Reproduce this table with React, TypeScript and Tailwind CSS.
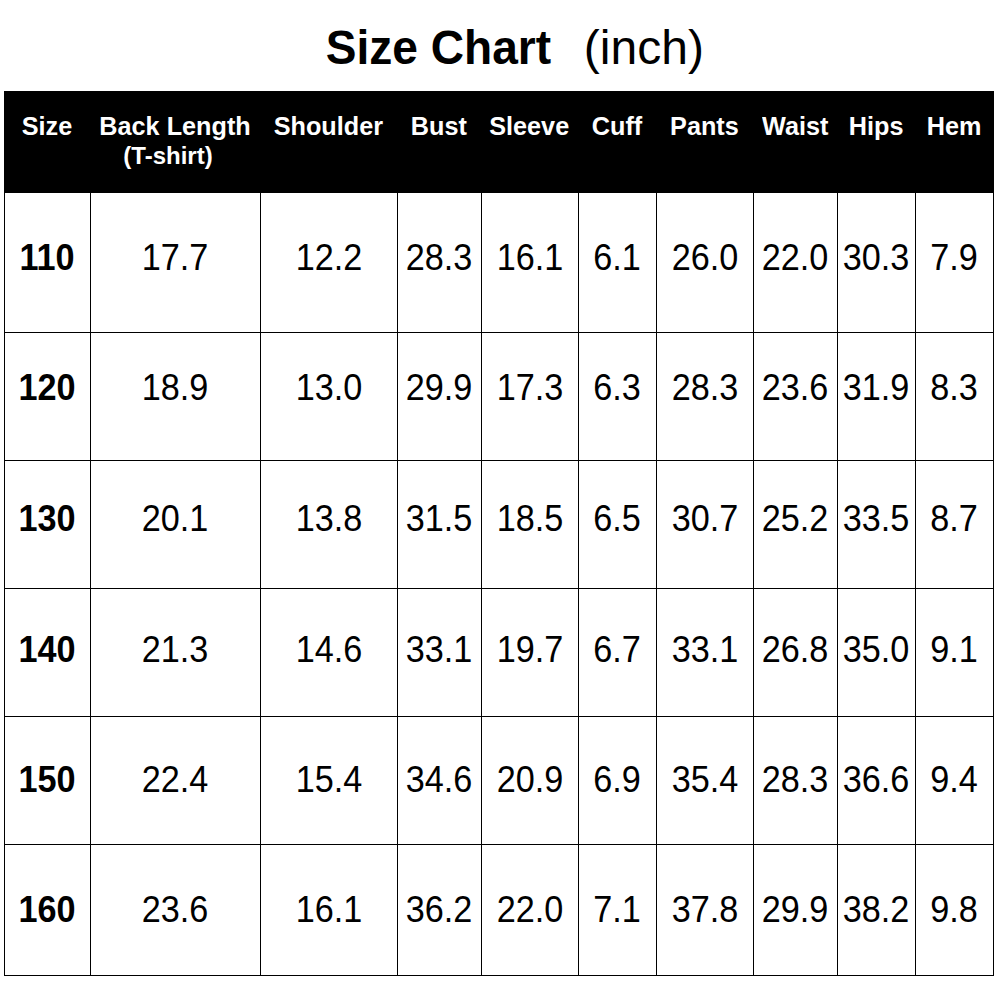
const columns = [
  { label: "Size", w: "w-[86px]" },
  { label: "Back Length", sub: "(T-shirt)", w: "w-[170px]" },
  { label: "Shoulder", w: "w-[137px]" },
  { label: "Bust", w: "w-[84px]" },
  { label: "Sleeve", w: "w-[97px]" },
  { label: "Cuff", w: "w-[78px]" },
  { label: "Pants", w: "w-[97px]" },
  { label: "Waist", w: "w-[84px]" },
  { label: "Hips", w: "w-[78px]" },
  { label: "Hem", w: "w-[78px]" },
];

// row height + bottom padding nudges the numbers up like the original image
const rows = [
  { h: "h-[140px] pb-[9px]", values: ["110", "17.7", "12.2", "28.3", "16.1", "6.1", "26.0", "22.0", "30.3", "7.9"] },
  { h: "h-[128px] pb-[17px]", values: ["120", "18.9", "13.0", "29.9", "17.3", "6.3", "28.3", "23.6", "31.9", "8.3"] },
  { h: "h-[128px] pb-[12px]", values: ["130", "20.1", "13.8", "31.5", "18.5", "6.5", "30.7", "25.2", "33.5", "8.7"] },
  { h: "h-[128px] pb-[5px]", values: ["140", "21.3", "14.6", "33.1", "19.7", "6.7", "33.1", "26.8", "35.0", "9.1"] },
  { h: "h-[128px] pb-[2px]", values: ["150", "22.4", "15.4", "34.6", "20.9", "6.9", "35.4", "28.3", "36.6", "9.4"] },
  { h: "h-[131px] pb-[1px]", values: ["160", "23.6", "16.1", "36.2", "22.0", "7.1", "37.8", "29.9", "38.2", "9.8"] },
];

export default function App() {
  return (
    <div className="w-[1001px] h-[1001px] bg-white text-black font-['Liberation_Sans',Arial,sans-serif] overflow-hidden">
      <h1 className="flex justify-center pl-[24px] pt-[24px] text-[48px] leading-none whitespace-nowrap">
        <span className="inline-block scale-x-[0.96] font-bold">Size Chart</span>
        <span className="ml-[28px] font-normal">(inch)</span>
      </h1>

      <div className="ml-[4px] mt-[19px] w-[990px]">
        <div className="flex h-[102px] bg-black text-white">
          {columns.map((col) => (
            <div key={col.label} className={`${col.w} flex flex-col items-center pt-[21px] font-bold whitespace-nowrap`}>
              <span className="text-[26px] leading-[29px] inline-block scale-x-[0.97]">{col.label}</span>
              {col.sub && <span className="text-[24px] leading-[29px] -ml-[14px]">{col.sub}</span>}
            </div>
          ))}
        </div>

        <div className="flex flex-col border-l border-black">
          {rows.map((row) => (
            <div key={row.values[0]} className="flex">
              {row.values.map((v, i) => (
                <div
                  key={i}
                  className={`${columns[i].w} ${row.h} ${i === 0 ? "font-bold" : "font-normal"} flex items-center justify-center border-r border-b border-black text-[36px] leading-[40px] whitespace-nowrap`}
                >
                  <span className="inline-block scale-x-[0.95]">{v}</span>
                </div>
              ))}
            </div>
          ))}
        </div>
      </div>
    </div>
  );
}
